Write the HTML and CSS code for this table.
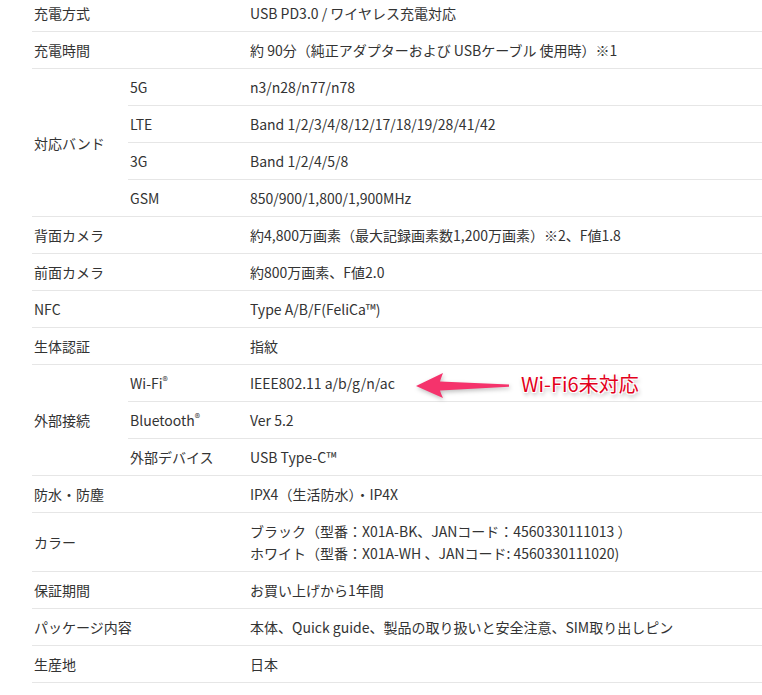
FILE: index.html
```html
<!DOCTYPE html>
<html lang="ja">

<head>
  <meta charset="UTF-8">
  <meta name="viewport" content="width=device-width, initial-scale=1.0">
  <title>スペック</title>
  <link rel="stylesheet" href="styles.css">
</head>

<body>
  <div class="spec-wrap">
    <table class="spec">
      <colgroup>
        <col class="col-head">
        <col class="col-sub">
        <col>
      </colgroup>
      <tr>
        <th colspan="2">充電方式</th>
        <td>USB PD3.0 / ワイヤレス充電対応</td>
      </tr>
      <tr>
        <th colspan="2">充電時間</th>
        <td>約 90分（純正アダプターおよび USBケーブル 使用時）※1</td>
      </tr>
      <tr>
        <th rowspan="4">対応バンド</th>
        <th class="sub">5G</th>
        <td>n3/n28/n77/n78</td>
      </tr>
      <tr>
        <th class="sub">LTE</th>
        <td>Band 1/2/3/4/8/12/17/18/19/28/41/42</td>
      </tr>
      <tr>
        <th class="sub">3G</th>
        <td>Band 1/2/4/5/8</td>
      </tr>
      <tr>
        <th class="sub">GSM</th>
        <td>850/900/1,800/1,900MHz</td>
      </tr>
      <tr>
        <th colspan="2">背面カメラ</th>
        <td>約4,800万画素（最大記録画素数1,200万画素）※2、F値1.8</td>
      </tr>
      <tr>
        <th colspan="2">前面カメラ</th>
        <td>約800万画素、F値2.0</td>
      </tr>
      <tr>
        <th colspan="2">NFC</th>
        <td>Type A/B/F(FeliCa™)</td>
      </tr>
      <tr>
        <th colspan="2">生体認証</th>
        <td>指紋</td>
      </tr>
      <tr>
        <th rowspan="3">外部接続</th>
        <th class="sub">Wi-Fi<sup>®</sup></th>
        <td>IEEE802.11 a/b/g/n/ac</td>
      </tr>
      <tr>
        <th class="sub">Bluetooth<sup>®</sup></th>
        <td>Ver 5.2</td>
      </tr>
      <tr>
        <th class="sub">外部デバイス</th>
        <td>USB Type-C™</td>
      </tr>
      <tr>
        <th colspan="2">防水・防塵</th>
        <td>IPX4（生活防水）・IP4X</td>
      </tr>
      <tr>
        <th colspan="2">カラー</th>
        <td>ブラック（型番：X01A-BK、JANコード：4560330111013 ）<br>ホワイト（型番：X01A-WH 、JANコード: 4560330111020)</td>
      </tr>
      <tr>
        <th colspan="2">保証期間</th>
        <td>お買い上げから1年間</td>
      </tr>
      <tr>
        <th colspan="2">パッケージ内容</th>
        <td>本体、Quick guide、製品の取り扱いと安全注意、SIM取り出しピン</td>
      </tr>
      <tr>
        <th colspan="2">生産地</th>
        <td>日本</td>
      </tr>
    </table>

    <!-- annotation -->
    <svg class="note-arrow" width="110" height="40" viewBox="0 0 110 40">
      <path d="M6 21 L33 8 Q31 13 30 16.5 L99 19.5 L99 21.8 L30 25.5 Q31 29 33 33 Z" fill="#f5336c" />
    </svg>
    <div class="note-text">Wi-Fi6未対応</div>
  </div>
</body>

</html>
```

FILE: styles.css
```css
* {
  margin: 0px;
  padding: 0px;
  box-sizing: border-box;
}

body {
  background: #fff;
  font-family: "Noto Sans CJK JP", "Liberation Sans", sans-serif;
  color: #333;
  overflow: hidden;
}

.spec-wrap {
  position: relative;
  margin-top: -5px;
  padding-left: 32px;
}

.spec {
  width: 760px;
  border-collapse: collapse;
  table-layout: fixed;
  font-size: 14px;
}

.col-head {
  width: 96px;
}

.col-sub {
  width: 120px;
}

.spec th,
.spec td {
  padding: 7px 2px;
  line-height: 22px;
  font-weight: normal;
  text-align: left;
  vertical-align: middle;
  border-bottom: 1px solid #e6e6e6;
  white-space: nowrap;
}

.spec sup {
  font-size: 11px;
  vertical-align: 4px;
  line-height: 0;
}

.note-arrow {
  position: absolute;
  left: 410px;
  top: 370px;
  filter: drop-shadow(1px 2px 2px rgba(0, 0, 0, 0.25));
}

.note-text {
  position: absolute;
  left: 521px;
  top: 377px;
  font-size: 20px;
  line-height: 24px;
  color: #e3001b;
  text-shadow: -1px -1px 0 #fff, 1px -1px 0 #fff, -1px 1px 0 #fff, 1px 1px 0 #fff, 1px 3px 4px rgba(0, 0, 0, 0.35);
}
```
